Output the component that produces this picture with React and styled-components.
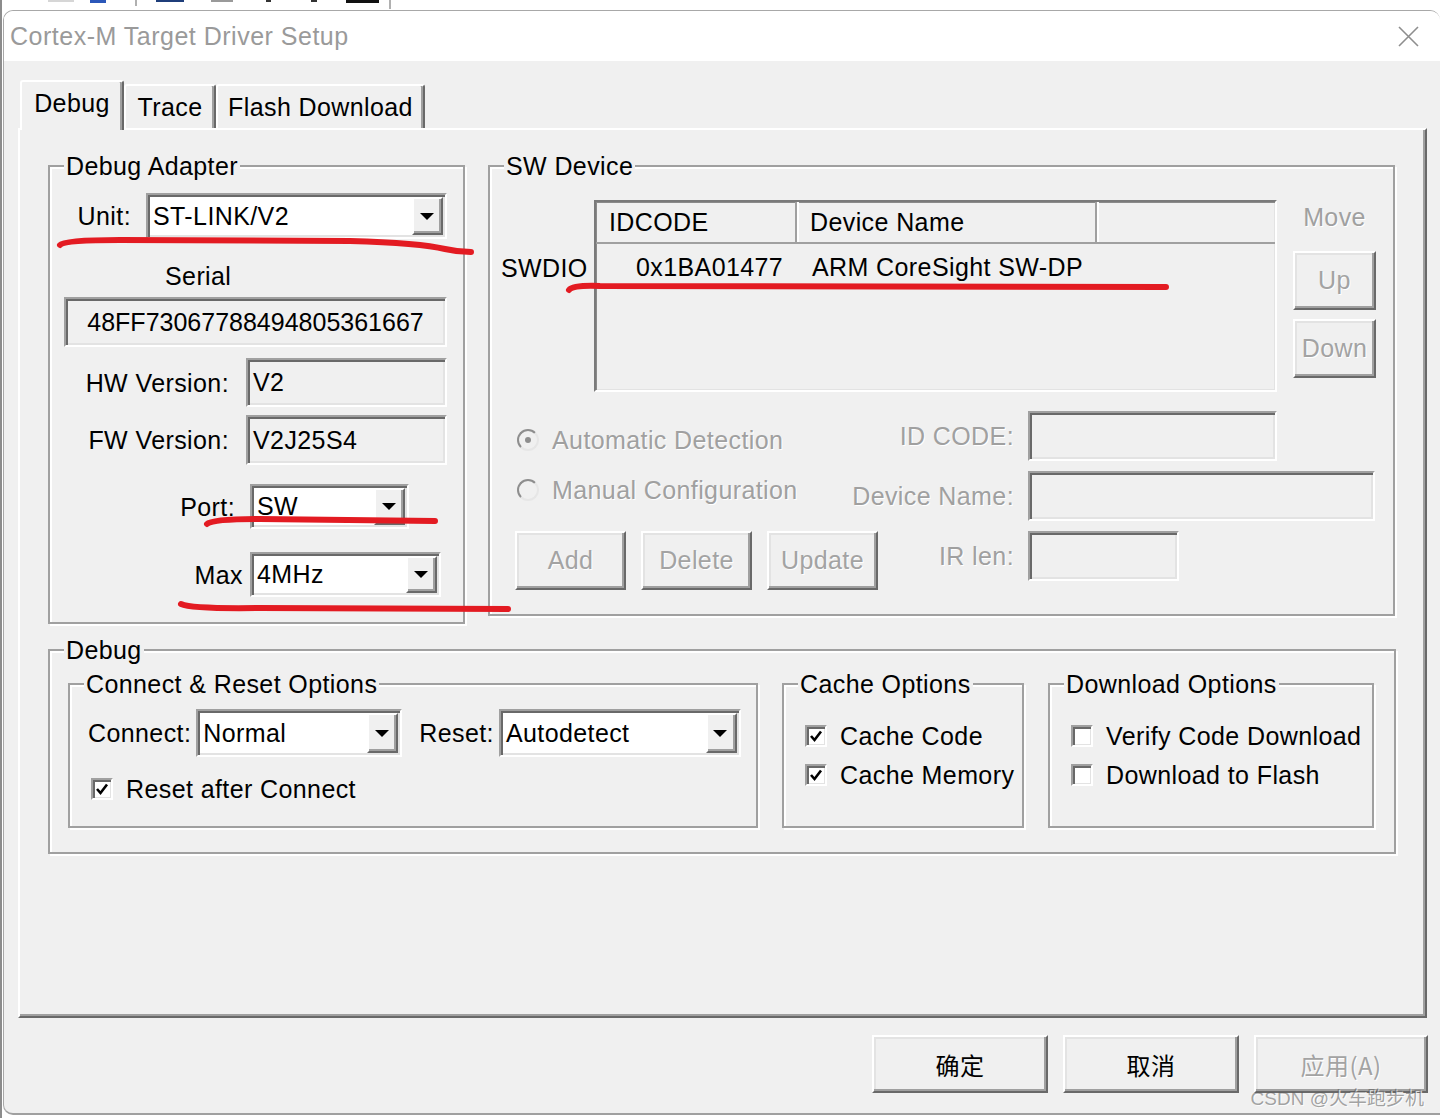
import React from "react";
import styled, { createGlobalStyle } from "styled-components";

const GlobalStyle = createGlobalStyle`
  html, body { margin: 0; padding: 0; }
  body {
    font-family: "Liberation Sans", Arial, sans-serif;
    font-size: 25px;
    letter-spacing: 0.4px;
    color: #000;
  }
  * { box-sizing: border-box; }
`;

const Page = styled.div`
  position: relative;
  width: 1440px;
  height: 1118px;
  overflow: hidden;
  background: linear-gradient(to right, #8c8c8c 0, #8c8c8c 2px, #fff 2px);
`;

const AppStrip = styled.div`
  height: 10px;
  display: flex;
  align-items: flex-start;
`;

const StripBit = styled.span`
  display: block;
  margin-left: ${p => p.$ml}px;
  width: ${p => p.$w}px;
  height: ${p => p.$h}px;
  background: ${p => p.$c};
`;

const Dialog = styled.div`
  margin-left: 3px;
  width: 1437px;
  height: 1105px;
  border-top: 1px solid #a8a8a8;
  border-left: 1px solid #a8a8a8;
  border-bottom: 2px solid #a0a0a0;
  border-radius: 10px 10px 0 10px;
  overflow: hidden;
  display: flex;
  flex-direction: column;
  background: #f0f0f0;
`;

const TitleBar = styled.div`
  height: 50px;
  flex: none;
  background: #fff;
  display: flex;
  align-items: center;
  justify-content: space-between;
  padding: 0 21px 0 6px;
`;

const Title = styled.span`
  font-size: 25px;
  letter-spacing: 0.5px;
  color: #9a9a9a;
`;

const Body = styled.div`
  flex: 1;
  display: flex;
  flex-direction: column;
  padding: 19px 0 0 14px;
`;

const TabRow = styled.div`
  display: flex;
  align-items: flex-end;
  height: 48px;
  margin-left: 2px;
  position: relative;
  z-index: 1;
`;

const Tab = styled.div`
  width: ${p => p.$w}px;
  height: ${p => (p.$active ? 50 : 44)}px;
  margin-bottom: ${p => (p.$active ? -2 : 0)}px;
  padding-bottom: ${p => (p.$active ? 6 : 0)}px;
  border: 2px solid;
  border-bottom: none;
  border-color: #fff #696969 transparent #fff;
  box-shadow: inset -2px 0 0 #a0a0a0;
  border-radius: 3px 3px 0 0;
  background: #f0f0f0;
  display: flex;
  align-items: center;
  justify-content: center;
`;

const Panel = styled.div`
  width: 1409px;
  height: 890px;
  flex: none;
  border: 2px solid;
  border-color: #fff #696969 #696969 #fff;
  box-shadow: inset -2px -2px 0 #a0a0a0;
  padding: 21px 0 0 28px;
  display: flex;
  flex-direction: column;
`;

const TopRow = styled.div`
  display: flex;
  align-items: flex-start;
  gap: 23px;
`;

const Group = styled.fieldset`
  margin: 0;
  padding: 0;
  min-width: 0;
  width: ${p => p.$w}px;
  height: ${p => p.$h}px;
  border: 2px solid #a0a0a0;
  box-shadow: inset 2px 2px 0 #fff, 2px 2px 0 #fff;
  display: flex;
  flex-direction: column;
  margin-top: ${p => p.$mt || 0}px;
`;

const Legend = styled.legend`
  margin-left: 14px;
  padding: 0 2px;
  line-height: 30px;
  font-size: 25px;
  background: #f0f0f0;
`;

const FieldRow = styled.div`
  display: flex;
  align-items: center;
  justify-content: ${p => (p.$start ? "flex-start" : "flex-end")};
  gap: ${p => p.$gap || 0}px;
  margin-top: ${p => p.$mt || 0}px;
  padding-left: ${p => p.$pl || 0}px;
  padding-right: ${p => p.$pr || 0}px;
`;

const Label = styled.span`
  line-height: 30px;
  white-space: nowrap;
  color: ${p => (p.$disabled ? "#a0a0a0" : "#000")};
  text-shadow: ${p => (p.$disabled ? "1px 1px 0 #fff" : "none")};
`;

const Sunken = styled.div`
  width: ${p => p.$w}px;
  height: ${p => p.$h || 50}px;
  flex: none;
  border: 2px solid;
  border-color: #a0a0a0 #fff #fff #a0a0a0;
  box-shadow: inset 2px 2px 0 #696969, inset -2px -2px 0 #e3e3e3;
  background: ${p => (p.$white ? "#fff" : "#f0f0f0")};
  display: flex;
  align-items: center;
  justify-content: ${p => (p.$center ? "center" : "flex-start")};
  padding: 2px 2px 2px ${p => (p.$center ? 2 : 5)}px;
  letter-spacing: ${p => (p.$center ? 0 : "0.4px")};
  white-space: nowrap;
`;

const ComboText = styled.span`
  flex: 1;
`;

const DropBtn = styled.span`
  width: 31px;
  align-self: stretch;
  border: 2px solid;
  border-color: #fff #696969 #696969 #fff;
  box-shadow: inset -2px -2px 0 #a0a0a0;
  background: #f0f0f0;
  display: flex;
  align-items: center;
  justify-content: center;

  &::after {
    content: "";
    border-left: 7px solid transparent;
    border-right: 7px solid transparent;
    border-top: 7px solid #000;
    margin-left: -2px;
  }
`;

const Combo = ({ w, h = 46, value }) => (
  <Sunken $w={w} $h={h} $white>
    <ComboText>{value}</ComboText>
    <DropBtn />
  </Sunken>
);

const SwTop = styled.div`
  display: flex;
  align-items: flex-start;
  margin-top: 19px;
`;

const SideLabel = styled.span`
  width: 104px;
  padding-left: 11px;
  margin-top: 53px;
  line-height: 30px;
`;

const List = styled.div`
  width: 683px;
  height: 192px;
  border: 2px solid;
  border-color: #7a7a7a #fff #fff #7a7a7a;
  box-shadow: inset 1px 1px 0 #8a8a8a, inset -1px -1px 0 #e3e3e3;
  background: #f0f0f0;
  display: flex;
  flex-direction: column;
`;

const ListRow = styled.div`
  display: flex;
  height: ${p => p.$h}px;
  align-items: center;
  border-bottom: ${p => (p.$head ? "2px solid #a0a0a0" : "none")};
  padding-left: 1px;
`;

const ListCell = styled.div`
  width: ${p => (p.$w ? `${p.$w}px` : "auto")};
  flex: ${p => (p.$w ? "none" : 1)};
  align-self: stretch;
  display: flex;
  align-items: center;
  padding-left: ${p => p.$pl}px;
  border-right: ${p => (p.$sep ? "2px solid #a0a0a0" : "none")};
  box-shadow: ${p => (p.$sep ? "2px 0 0 #fff" : "none")};
  white-space: nowrap;
`;

const MoveCol = styled.div`
  width: 83px;
  margin-left: 16px;
  display: flex;
  flex-direction: column;
  align-items: center;
`;

const MoveLabel = styled(Label)`
  margin-top: 2px;
`;

const Button = styled.div`
  width: ${p => p.$w}px;
  height: ${p => p.$h}px;
  flex: none;
  margin-top: ${p => p.$mt || 0}px;
  border: 2px solid;
  border-color: #fff #696969 #696969 #fff;
  box-shadow: inset -2px -2px 0 #a0a0a0, inset 2px 2px 0 #e3e3e3;
  background: #f0f0f0;
  display: flex;
  align-items: center;
  justify-content: center;
  font-family: ${p => (p.$cjk ? '"Noto Sans CJK SC", "Liberation Sans", sans-serif' : "inherit")};
  font-size: ${p => (p.$cjk ? 24 : 25)}px;
  color: ${p => (p.$disabled ? "#a3a3a3" : "#000")};
  text-shadow: ${p => (p.$disabled ? "1px 1px 0 #fff" : "none")};
`;

const ManualGrid = styled.div`
  display: grid;
  grid-template-columns: 324px 161px 347px;
  grid-template-rows: 50px 50px 59px;
  column-gap: 14px;
  row-gap: 10px;
  margin-top: 19px;
  padding-left: 25px;
`;

const GridLabel = styled(Label)`
  justify-self: end;
  align-self: ${p => (p.$top ? "start" : "center")};
  margin-top: ${p => p.$mt || 0}px;
`;

const Radio = styled.div`
  display: flex;
  align-items: center;
  gap: 13px;
  align-self: start;
  margin-top: ${p => p.$mt}px;
  margin-left: 2px;
`;

const RadioDot = styled.span`
  width: 22px;
  height: 22px;
  border-radius: 50%;
  border: 2px solid;
  border-color: #8e8e8e #e6e6e6 #e6e6e6 #8e8e8e;
  background: #f0f0f0;
  display: flex;
  align-items: center;
  justify-content: center;

  &::after {
    content: "";
    width: 6px;
    height: 6px;
    border-radius: 50%;
    background: ${p => (p.$on ? "#8e8e8e" : "transparent")};
  }
`;

const ButtonRow = styled.div`
  display: flex;
  gap: 15px;
  align-self: start;
  width: max-content;
`;

const SubRow = styled.div`
  display: flex;
  gap: 24px;
  padding-left: 18px;
  margin-top: 4px;
`;

const Spacer = styled.span`
  width: ${p => p.$w}px;
  flex: none;
`;

const CheckRow = styled.div`
  display: flex;
  align-items: center;
  gap: 13px;
  margin-top: ${p => p.$mt}px;
  padding-left: 21px;
  line-height: 30px;
  white-space: nowrap;
`;

const CheckBox = styled.span`
  width: 22px;
  height: 22px;
  flex: none;
  border: 2px solid;
  border-color: #a0a0a0 #fff #fff #a0a0a0;
  box-shadow: inset 2px 2px 0 #696969, inset -1px -1px 0 #e3e3e3;
  background: #fff;
  display: flex;
  align-items: center;
  justify-content: center;
`;

const FooterRow = styled.div`
  display: flex;
  justify-content: flex-end;
  gap: 15px;
  margin-top: 17px;
  padding-right: 12px;
`;

const Watermark = styled.div`
  position: absolute;
  right: 16px;
  bottom: 8px;
  font-family: "Liberation Sans", "Noto Sans CJK SC", sans-serif;
  font-size: 19px;
  letter-spacing: 0;
  color: rgba(90, 90, 90, 0.55);
  text-shadow: 1px 1px 0 rgba(255, 255, 255, 0.8);
  white-space: nowrap;
`;

const Marks = styled.svg`
  position: absolute;
  left: 0;
  top: 0;
  pointer-events: none;
`;

const stripBits = [
  { ml: 48, w: 26, h: 2, c: "#d6d6d6" },
  { ml: 16, w: 16, h: 3, c: "#2b57b9" },
  { ml: 29, w: 2, h: 6, c: "#b0b0b0" },
  { ml: 19, w: 28, h: 2, c: "#1f3e7a" },
  { ml: 27, w: 22, h: 2, c: "#9a9a9a" },
  { ml: 33, w: 5, h: 2, c: "#333" },
  { ml: 40, w: 6, h: 2, c: "#333" },
  { ml: 29, w: 33, h: 3, c: "#111" },
  { ml: 10, w: 2, h: 9, c: "#b0b0b0" },
];

const Check = ({ on }) => (
  <CheckBox>
    {on && (
      <svg width="14" height="14" viewBox="0 0 14 14">
        <path d="M2 7 L5.5 11 L12 2.5" fill="none" stroke="#000" strokeWidth="2.6" />
      </svg>
    )}
  </CheckBox>
);

export default function App() {
  return (
    <Page>
      <GlobalStyle />
      <AppStrip>
        {stripBits.map((b, i) => (
          <StripBit key={i} $ml={b.ml} $w={b.w} $h={b.h} $c={b.c} />
        ))}
      </AppStrip>
      <Dialog>
        <TitleBar>
          <Title>Cortex-M Target Driver Setup</Title>
          <svg width="21" height="21" viewBox="0 0 21 21">
            <path d="M1 1 L20 20 M20 1 L1 20" stroke="#8e8e8e" strokeWidth="1.6" />
          </svg>
        </TitleBar>
        <Body>
          <TabRow>
            <Tab $active $w={104}>Debug</Tab>
            <Tab $w={92}>Trace</Tab>
            <Tab $w={209}>Flash Download</Tab>
          </TabRow>
          <Panel>
            <TopRow>
              <Group $w={417} $h={473}>
                <Legend>Debug Adapter</Legend>
                <FieldRow $mt={12} $pr={16} $gap={15}>
                  <Label>Unit:</Label>
                  <Combo w={301} value="ST-LINK/V2" />
                </FieldRow>
                <FieldRow $start $mt={22} $pl={115}>
                  <Label>Serial</Label>
                </FieldRow>
                <FieldRow $mt={6} $pr={16}>
                  <Sunken $w={383} $center>48FF73067788494805361667</Sunken>
                </FieldRow>
                <FieldRow $mt={11} $pr={16} $gap={17}>
                  <Label>HW Version:</Label>
                  <Sunken $w={201} $h={49}>V2</Sunken>
                </FieldRow>
                <FieldRow $mt={8} $pr={16} $gap={17}>
                  <Label>FW Version:</Label>
                  <Sunken $w={201}>V2J25S4</Sunken>
                </FieldRow>
                <FieldRow $mt={19} $pr={54} $gap={15}>
                  <Label>Port:</Label>
                  <Combo w={159} h={45} value="SW" />
                </FieldRow>
                <FieldRow $mt={23} $pr={22} $gap={7}>
                  <Label>Max</Label>
                  <Combo w={191} h={45} value="4MHz" />
                </FieldRow>
              </Group>

              <Group $w={907} $h={465}>
                <Legend>SW Device</Legend>
                <SwTop>
                  <SideLabel>SWDIO</SideLabel>
                  <List>
                    <ListRow $head $h={42}>
                      <ListCell $w={200} $pl={12} $sep>IDCODE</ListCell>
                      <ListCell $w={300} $pl={13} $sep>Device Name</ListCell>
                      <ListCell $pl={0} />
                    </ListRow>
                    <ListRow $h={46}>
                      <ListCell $w={202} $pl={39}>0x1BA01477</ListCell>
                      <ListCell $w={300} $pl={13}>ARM CoreSight SW-DP</ListCell>
                    </ListRow>
                  </List>
                  <MoveCol>
                    <MoveLabel $disabled>Move</MoveLabel>
                    <Button $w={83} $h={59} $mt={19} $disabled>Up</Button>
                    <Button $w={83} $h={59} $mt={9} $disabled>Down</Button>
                  </MoveCol>
                </SwTop>
                <ManualGrid>
                  <Radio $mt={14}>
                    <RadioDot $on />
                    <Label $disabled>Automatic Detection</Label>
                  </Radio>
                  <GridLabel $disabled>ID CODE:</GridLabel>
                  <Sunken $w={249} />

                  <Radio $mt={4}>
                    <RadioDot />
                    <Label $disabled>Manual Configuration</Label>
                  </Radio>
                  <GridLabel $disabled>Device Name:</GridLabel>
                  <Sunken $w={347} />

                  <ButtonRow>
                    <Button $w={111} $h={59} $disabled>Add</Button>
                    <Button $w={111} $h={59} $disabled>Delete</Button>
                    <Button $w={111} $h={59} $disabled>Update</Button>
                  </ButtonRow>
                  <GridLabel $disabled $top $mt={10}>IR len:</GridLabel>
                  <Sunken $w={151} />
                </ManualGrid>
              </Group>
            </TopRow>

            <Group $w={1348} $h={219} $mt={11}>
              <Legend>Debug</Legend>
              <SubRow>
                <Group $w={690} $h={159}>
                  <Legend>Connect &amp; Reset Options</Legend>
                  <FieldRow $start $mt={10} $pl={18}>
                    <Label>Connect:</Label>
                    <Spacer $w={5} />
                    <Combo w={206} h={48} value="Normal" />
                    <Spacer $w={17} />
                    <Label>Reset:</Label>
                    <Spacer $w={5} />
                    <Combo w={242} h={48} value="Autodetect" />
                  </FieldRow>
                  <CheckRow $mt={17}>
                    <Check on />
                    Reset after Connect
                  </CheckRow>
                </Group>
                <Group $w={242} $h={159}>
                  <Legend>Cache Options</Legend>
                  <CheckRow $mt={22}>
                    <Check on />
                    Cache Code
                  </CheckRow>
                  <CheckRow $mt={9}>
                    <Check on />
                    Cache Memory
                  </CheckRow>
                </Group>
                <Group $w={326} $h={159}>
                  <Legend>Download Options</Legend>
                  <CheckRow $mt={22}>
                    <Check />
                    Verify Code Download
                  </CheckRow>
                  <CheckRow $mt={9}>
                    <Check />
                    Download to Flash
                  </CheckRow>
                </Group>
              </SubRow>
            </Group>
          </Panel>
          <FooterRow>
            <Button $w={176} $h={58} $cjk>确定</Button>
            <Button $w={176} $h={58} $cjk>取消</Button>
            <Button $w={174} $h={58} $cjk $disabled>应用(A)</Button>
          </FooterRow>
        </Body>
      </Dialog>

      <Watermark>CSDN @火车跑步机</Watermark>

      <Marks width="1440" height="1118" viewBox="0 0 1440 1118">
        <g fill="none" stroke="#e31b22" strokeWidth="6" strokeLinecap="round" strokeLinejoin="round">
          <path d="M60 245 Q64 240 120 240 L350 241 Q420 243 445 249 Q458 252 471 252" />
          <path d="M207 524 Q212 519 260 519 L435 521" />
          <path d="M181 604 Q192 609 260 608 L508 609" />
          <path d="M569 290 Q573 285 600 286 L1166 287" />
        </g>
      </Marks>
    </Page>
  );
}
